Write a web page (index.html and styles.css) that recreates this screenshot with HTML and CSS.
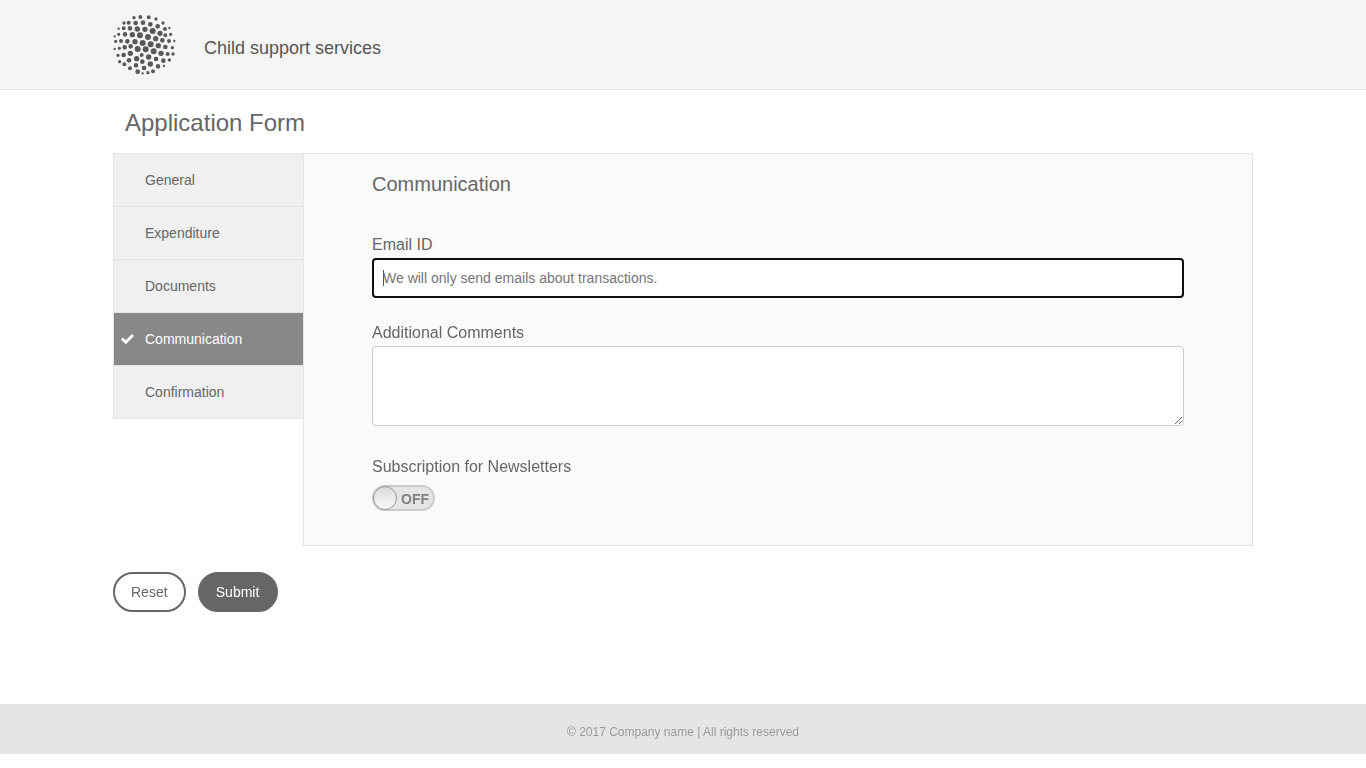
FILE: index.html
```html
<!DOCTYPE html>
<html lang="en">
<head>
<meta charset="utf-8">
<meta name="viewport" content="width=device-width, initial-scale=1">
<title>Child support services</title>
<link rel="stylesheet" href="styles.css">
</head>
<body>
<header class="site-header">
  <div class="container brand">
    <svg class="logo" viewBox="9 12 192 186" aria-hidden="true">
      <g fill="none" stroke="#585858" stroke-linecap="round">
        <path stroke-width="7" d="M14 79h0M14 117h0M178 54h0M193 93h0M162 168h0M98 190h0M26 56h0"/>
        <path stroke-width="10" d="M72 23h0M42 39h0M138 27h0M159 39h0M26 73h0M17 94h0M182 73h0M28 115h0M24 136h0M29 155h0M114 188h0M189 132h0M187 113h0M178 150h0"/>
        <path stroke-width="12" d="M91 21h0M116 22h0M56 38h0M41 55h0M33 93h0M166 76h0M177 93h0M43 163h0M60 175h0M173 132h0M129 184h0M165 57h0M95 135h0"/>
        <path stroke-width="14" d="M77 39h0M99 38h0M121 43h0M143 49h0M60 55h0M45 73h0M52 94h0M44 112h0M41 135h0M57 151h0M78 166h0M83 185h0M102 174h0M97 155h0M144 169h0M160 152h0M138 147h0M157 91h0M166 111h0M62 109h0"/>
        <path stroke-width="16" d="M82 57h0M105 58h0M150 70h0M67 74h0M75 95h0M137 86h0M145 107h0M61 130h0M80 146h0M116 141h0M153 130h0M121 162h0"/>
        <path stroke-width="18" d="M128 63h0M90 76h0M114 81h0M98 99h0M122 103h0M83 117h0M107 118h0M131 124h0"/>
      </g>
    </svg>
    <span class="brand-name">Child support services</span>
  </div>
</header>
<main class="container">
  <h1 class="page-title">Application Form</h1>
  <form class="application">
    <div class="wizard">
      <nav class="tabs" aria-label="Form sections">
        <a class="tab" href="#general">General</a>
        <a class="tab" href="#expenditure">Expenditure</a>
        <a class="tab" href="#documents">Documents</a>
        <a class="tab tab-active" href="#communication" aria-current="step"><svg class="check" viewBox="0 0 14 12" aria-hidden="true"><path d="M1.8 5.5L5.8 9.3L13 2" fill="none" stroke="#fff" stroke-width="2.8"/></svg>Communication</a>
        <a class="tab" href="#confirmation">Confirmation</a>
      </nav>
      <section class="panel" id="communication">
        <h2 class="panel-title">Communication</h2>
        <label class="label" for="email">Email ID</label>
        <input class="field email" id="email" type="email" placeholder="We will only send emails about transactions." autofocus>
        <label class="label" for="comments">Additional Comments</label>
        <textarea class="field comments" id="comments"></textarea>
        <label class="label" for="newsletter">Subscription for Newsletters</label>
        <label class="switch">
          <input class="switch-input" id="newsletter" type="checkbox">
          <span class="knob"></span>
          <span class="switch-text">OFF</span>
        </label>
      </section>
    </div>
    <div class="actions">
      <button class="button button-outline" type="reset">Reset</button>
      <button class="button button-solid" type="submit">Submit</button>
    </div>
  </form>
</main>
<footer class="site-footer">© 2017 Company name | All rights reserved</footer>
</body>
</html>
```
FILE: styles.css
```css
* { box-sizing: border-box; }

body {
  margin: 0;
  background: #fff;
  color: #666;
  font: 14px/20px "Liberation Sans", Arial, sans-serif;
}

.container {
  max-width: 1140px;
  margin: 0 auto;
}

.site-header {
  padding: 14px 0 13px;
  background: #f5f5f5;
  border-bottom: 1px solid #e5e5e5;
}

.brand {
  display: flex;
  align-items: center;
  gap: 27px;
}

.logo {
  width: 64px;
  height: 62px;
}

.brand-name {
  padding-top: 6px;
  color: #555;
  font-size: 18px;
}

.page-title {
  margin: 0;
  padding: 18px 12px 15px;
  font-size: 24px;
  font-weight: 400;
  line-height: 30px;
}

.wizard {
  display: flex;
  align-items: flex-start;
}

.tabs {
  flex: 0 0 190px;
  border: 1px solid #e4e4e4;
  border-right: 0;
}

.tab {
  display: flex;
  align-items: center;
  position: relative;
  height: 53px;
  padding-left: 31px;
  background: #f0f0f0;
  border-bottom: 1px solid #e4e4e4;
  color: #666;
  text-decoration: none;
}

.tab:last-child {
  height: 52px;
  border-bottom: 0;
}

.tab-active {
  background: #888;
  color: #fff;
}

.check {
  position: absolute;
  left: 6px;
  width: 14px;
  height: 12px;
}

.panel {
  flex: 1;
  padding: 18px 68px 34px;
  background: #fafafa;
  border: 1px solid #e4e4e4;
}

.panel-title {
  margin: 0 0 39px;
  font-size: 20px;
  font-weight: 400;
  line-height: 24px;
}

.label {
  display: block;
  font-size: 16px;
  line-height: 20px;
  padding-bottom: 3px;
}

.field {
  display: block;
  width: 100%;
  margin: 0;
  padding: 8px 10px;
  background: #fff;
  border: 1px solid #ccc;
  border-radius: 4px;
  color: #555;
  font: inherit;
}

.field:focus {
  outline: 2px solid #101010;
  outline-offset: -2px;
}

.email {
  height: 40px;
  margin-bottom: 25px;
}

.email::placeholder { color: #757575; }

/* Steady caret while the focused field is still empty */
.email:focus:placeholder-shown {
  background: #fff linear-gradient(#555, #555) 10px center / 1px 16px no-repeat;
}

.comments {
  height: 80px;
  margin-bottom: 31px;
  resize: vertical;
}

.switch {
  display: flex;
  align-items: center;
  position: relative;
  width: 63px;
  height: 26px;
  margin-top: 5px;
  background: #e5e5e5;
  border: 2px solid #ccc;
  border-radius: 13px;
}

.switch-input {
  position: absolute;
  inset: 0;
  width: 100%;
  height: 100%;
  margin: 0;
  opacity: 0;
}

.knob {
  flex: none;
  width: 24px;
  height: 24px;
  margin-left: -1px;
  background: linear-gradient(#d9d9d9, #fafafa);
  border: 1px solid #999;
  border-radius: 50%;
}

.switch-text {
  padding: 2px 0 0 4px;
  color: #808080;
  font-weight: 700;
}

.actions {
  display: flex;
  gap: 12px;
  padding: 26px 0 92px;
}

.button {
  height: 40px;
  padding: 0 16px;
  border: 2px solid #666;
  border-radius: 20px;
  font: inherit;
}

.button-outline {
  background: #fff;
  color: #666;
}

.button-solid {
  min-width: 80px;
  background: #666;
  color: #fff;
}

.site-footer {
  padding: 19px 0 13px;
  background: #e5e5e5;
  color: #999;
  font-size: 12px;
  line-height: 18px;
  text-align: center;
}
```
